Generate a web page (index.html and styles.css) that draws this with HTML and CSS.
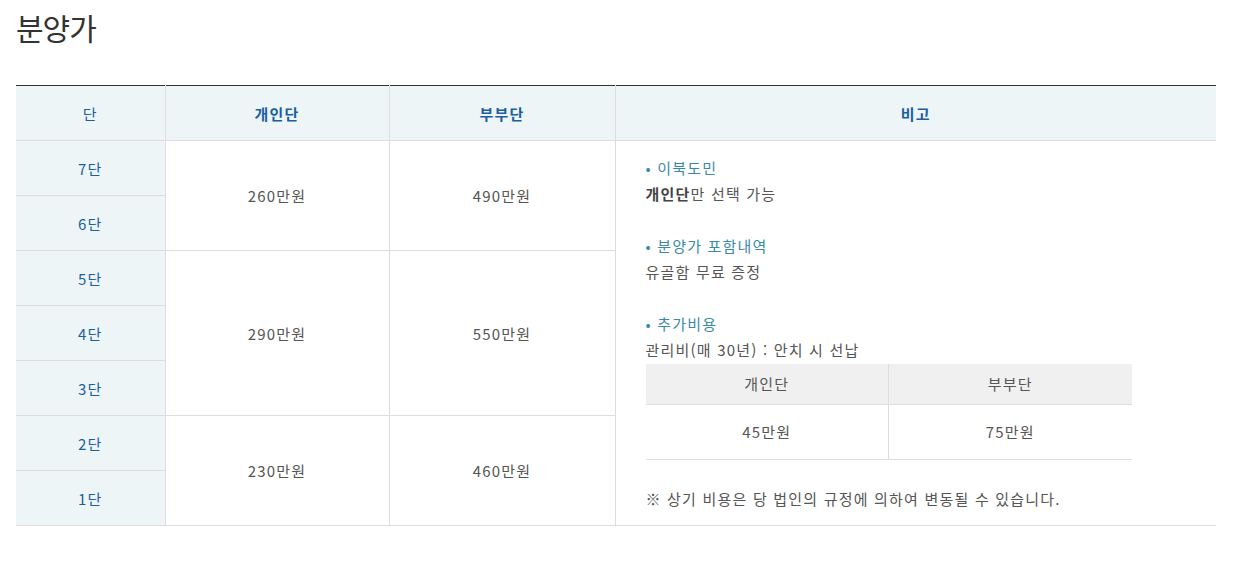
FILE: index.html
```html
<!DOCTYPE html>
<html lang="ko">
<head>
  <meta charset="UTF-8">
  <title>분양가</title>
  <link rel="stylesheet" href="styles.css">
</head>
<body>
  <div class="wrap">
    <h2 class="title">분양가</h2>

    <table class="price">
      <colgroup>
        <col class="c-floor">
        <col class="c-one">
        <col class="c-two">
        <col class="c-note">
      </colgroup>
      <thead>
        <tr>
          <th class="floor-head">단</th>
          <th>개인단</th>
          <th>부부단</th>
          <th class="last">비고</th>
        </tr>
      </thead>
      <tbody>
        <tr>
          <td class="floor">7단</td>
          <td rowspan="2">260만원</td>
          <td rowspan="2">490만원</td>
          <td rowspan="7" class="note last">
            <p class="point">• 이북도민</p>
            <p><b>개인단</b>만 선택 가능</p>
            <p>&nbsp;</p>
            <p class="point">• 분양가 포함내역</p>
            <p>유골함 무료 증정</p>
            <p>&nbsp;</p>
            <p class="point">• 추가비용</p>
            <p>관리비(매 30년) : 안치 시 선납</p>
            <table class="fee">
              <tr>
                <th>개인단</th>
                <th>부부단</th>
              </tr>
              <tr>
                <td>45만원</td>
                <td>75만원</td>
              </tr>
            </table>
            <p>&nbsp;</p>
            <p>※ 상기 비용은 당 법인의 규정에 의하여 변동될 수 있습니다.</p>
          </td>
        </tr>
        <tr><td class="floor">6단</td></tr>
        <tr>
          <td class="floor">5단</td>
          <td rowspan="3">290만원</td>
          <td rowspan="3">550만원</td>
        </tr>
        <tr><td class="floor">4단</td></tr>
        <tr><td class="floor">3단</td></tr>
        <tr>
          <td class="floor">2단</td>
          <td rowspan="2">230만원</td>
          <td rowspan="2">460만원</td>
        </tr>
        <tr><td class="floor">1단</td></tr>
      </tbody>
    </table>
  </div>
</body>
</html>
```

FILE: styles.css
```css
body {
  margin: 0;
  padding: 0 16px;
  font-family: "Noto Sans CJK KR", "Noto Sans", sans-serif;
  color: #555;
  background: #fff;
}
.wrap {
  width: 1200px;
}
.title {
  margin: 0;
  padding-top: 6px;
  height: 79px;
  font-size: 30px;
  font-weight: 400;
  line-height: 42px;
  color: #333;
  letter-spacing: -1px;
}
.price {
  width: 1200px;
  border-collapse: collapse;
  table-layout: fixed;
  border-top: 1px solid #333;
  font-size: 15px;
  letter-spacing: 1.2px;
}
.c-floor { width: 149px; }
.c-one { width: 224px; }
.c-two { width: 226px; }
.c-note { width: 601px; }
.price > thead th {
  height: 54px;
  padding: 0;
  background: #edf5f7;
  color: #1b5f9e;
  font-weight: 700;
  border-right: 1px solid #ddd;
  border-bottom: 1px solid #ddd;
}
.price > thead th.floor-head {
  font-weight: 400;
}
.price > tbody > tr > td {
  height: 54px;
  padding: 0;
  text-align: center;
  vertical-align: middle;
  border-right: 1px solid #ddd;
  border-bottom: 1px solid #ddd;
  color: #555;
}
.price > tbody > tr > td.floor {
  background: #eef5f7;
  color: #1b5f9e;
}
.price .last {
  border-right: none !important;
}
.price > tbody > tr > td.note {
  text-align: left;
  padding: 0 30px;
  color: #555;
}
.note p {
  margin: 0;
  line-height: 26px;
}
.note b {
  color: #444;
}
.note .point {
  color: #3a8aa6;
}
.fee {
  width: 486px;
  border-collapse: collapse;
  table-layout: fixed;
  margin-top: 1px;
}
.fee th {
  height: 40px;
  padding: 0;
  background: #f0f0f0;
  font-weight: 400;
  text-align: center;
  color: #555;
  border-bottom: 1px solid #ddd;
}
.fee td {
  height: 54px;
  padding: 0;
  text-align: center;
  color: #555;
  border-bottom: 1px solid #ddd;
}
.fee th:first-child,
.fee td:first-child {
  border-right: 1px solid #ddd;
}
```
